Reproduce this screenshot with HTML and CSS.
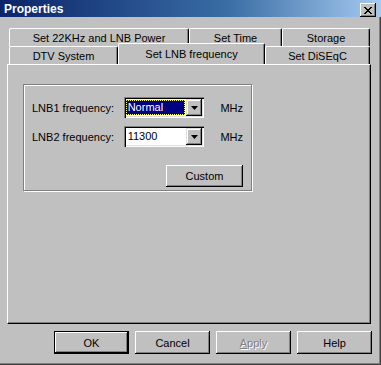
FILE: index.html
```html
<!DOCTYPE html>
<html>
  <head>
    <title>Properties</title>
    <link rel="stylesheet" href="styles.css">
  </head>
  <body>
    <div class="window">
      <div class="titlebar">
        <span class="titlebar__text">Properties</span>
        <button class="titlebar__close" type="button">
          <svg width="8" height="7" viewBox="0 0 8 7">
            <path d="M0 0h2v1h1v1h2v-1h1v-1h2v1h-1v1h-1v1h-1v1h1v1h1v1h1v1h-2v-1h-1v-1h-2v1h-1v1h-2v-1h1v-1h1v-1h1v-1h-1v-1h-1v-1h-1z" fill="#000"/>
          </svg>
        </button>
      </div>

      <div class="tabs">
        <div class="tab-row">
          <div class="tab tab--w180">Set 22KHz and LNB Power</div>
          <div class="tab tab--w93">Set Time</div>
          <div class="tab tab--w88">Storage</div>
        </div>
        <div class="tab-row">
          <div class="tab tab--w109">DTV System</div>
          <div class="tab tab--active">Set LNB frequency</div>
          <div class="tab tab--w105">Set DiSEqC</div>
        </div>
      </div>

      <div class="panel">
        <div class="group">
          <div class="field">
            <label class="field__label">LNB1 frequency:</label>
            <div class="combo">
              <span class="combo__value combo__value--focus">Normal</span>
              <span class="combo__arrow">
                <svg width="7" height="4" viewBox="0 0 7 4"><path d="M0 0h7l-3.5 4z" fill="#000"/></svg>
              </span>
            </div>
            <span class="field__unit">MHz</span>
          </div>
          <div class="field">
            <label class="field__label">LNB2 frequency:</label>
            <div class="combo">
              <span class="combo__value">11300</span>
              <span class="combo__arrow">
                <svg width="7" height="4" viewBox="0 0 7 4"><path d="M0 0h7l-3.5 4z" fill="#000"/></svg>
              </span>
            </div>
            <span class="field__unit">MHz</span>
          </div>
          <div class="group__actions">
            <button class="btn btn--custom" type="button">Custom</button>
          </div>
        </div>
      </div>

      <div class="footer">
        <button class="btn btn--default" type="button">OK</button>
        <button class="btn" type="button">Cancel</button>
        <button class="btn btn--disabled" type="button"><u>A</u>pply</button>
        <button class="btn" type="button">Help</button>
      </div>
    </div>
  </body>
</html>
```

FILE: styles.css
```css
body { margin: 0; background: #c0c0c0; font-family: "Liberation Sans", Arial, sans-serif; font-size: 11px; color: #000; }

.window {
  width: 381px;
  height: 365px;
  box-sizing: border-box;
  background: #c0c0c0;
  box-shadow: inset -1px -1px #404040, inset -2px -2px #808080;
  overflow: hidden;
}

.titlebar {
  height: 17px;
  display: flex;
  align-items: center;
  justify-content: space-between;
  padding: 0 5px 0 4px;
  background: linear-gradient(to right, #0a246a 0%, #3a6ea5 60%, #a6caf0 100%);
}
.titlebar__text { color: #fff; font-weight: bold; font-size: 12px; }
.titlebar__close {
  width: 16px;
  height: 14px;
  margin-top: 3px;
  padding: 0;
  display: flex;
  align-items: center;
  justify-content: center;
  background: #c0c0c0;
  border: none;
  box-shadow: inset -1px -1px #000, inset 1px 1px #fff, inset -2px -2px #808080;
}

.tabs { margin: 11px 0 0 9px; width: 361px; }
.tab-row { display: flex; height: 18px; }
.tab {
  box-sizing: border-box;
  height: 18px;
  display: flex;
  align-items: center;
  justify-content: center;
  padding-top: 1px;
  border-top: 1px solid #fff;
  border-left: 1px solid #fff;
  border-right: 1px solid #000;
  border-radius: 2px 2px 0 0;
  box-shadow: inset -1px 0 #808080;
  background: #c0c0c0;
}
.tab--w180 { width: 180px; }
.tab--w93 { width: 93px; }
.tab--w88 { width: 88px; }
.tab--w109 { width: 109px; }
.tab--w105 { width: 105px; }
.tab--active {
  position: relative;
  z-index: 1;
  width: 147px;
  height: 21px;
  margin-top: -3px;
  padding-bottom: 2px;
}

.panel {
  position: relative;
  margin-left: 7px;
  width: 364px;
  height: 260px;
  box-sizing: border-box;
  border-top: 1px solid #fff;
  border-left: 1px solid #fff;
  border-right: 1px solid #000;
  border-bottom: 1px solid #000;
  box-shadow: inset -1px -1px #808080;
  padding: 19px 0 0 15px;
}

.group {
  width: 229px;
  height: 107px;
  box-sizing: border-box;
  border: 1px solid #808080;
  box-shadow: 1px 1px #fff, inset 1px 1px #fff;
  padding: 12px 8px 0 8px;
  display: flex;
  flex-direction: column;
  gap: 8px;
}

.field { display: flex; align-items: center; height: 21px; }
.field__label { width: 92px; }
.field__unit { margin-left: 16px; }

.combo {
  width: 81px;
  height: 21px;
  box-sizing: border-box;
  display: flex;
  align-items: center;
  background: #fff;
  padding: 2px;
  box-shadow: inset 1px 1px #808080, inset 2px 2px #000, inset -1px -1px #fff, inset -2px -2px #dfdfdf;
}
.combo__value { flex: 1; height: 15px; line-height: 15px; padding-left: 2px; margin-right: 1px; }
.combo__value--focus {
  background: #000080;
  color: #fff;
  outline: 1px dotted #ffff80;
  outline-offset: -1px;
}
.combo__arrow {
  width: 16px;
  height: 17px;
  box-sizing: border-box;
  display: flex;
  align-items: center;
  justify-content: center;
  background: #c0c0c0;
  box-shadow: inset -1px -1px #000, inset 1px 1px #dfdfdf, inset -2px -2px #808080, inset 2px 2px #fff;
}

.group__actions { display: flex; justify-content: flex-end; margin-top: 10px; }

.btn {
  width: 75px;
  height: 23px;
  padding: 0;
  border: none;
  background: #c0c0c0;
  font-family: inherit;
  font-size: 11px;
  color: #000;
  box-shadow: inset -1px -1px #000, inset 1px 1px #fff, inset -2px -2px #808080;
}
.btn--custom { width: 77px; height: 22px; }
.btn--default {
  box-shadow: inset 0 0 0 1px #000, inset -2px -2px #000, inset 2px 2px #fff, inset -3px -3px #808080;
}
.btn--disabled { color: #808080; text-shadow: 1px 1px #fff; }

.footer {
  display: flex;
  justify-content: flex-end;
  gap: 6px;
  padding: 7px 9px 0 0;
}
```
